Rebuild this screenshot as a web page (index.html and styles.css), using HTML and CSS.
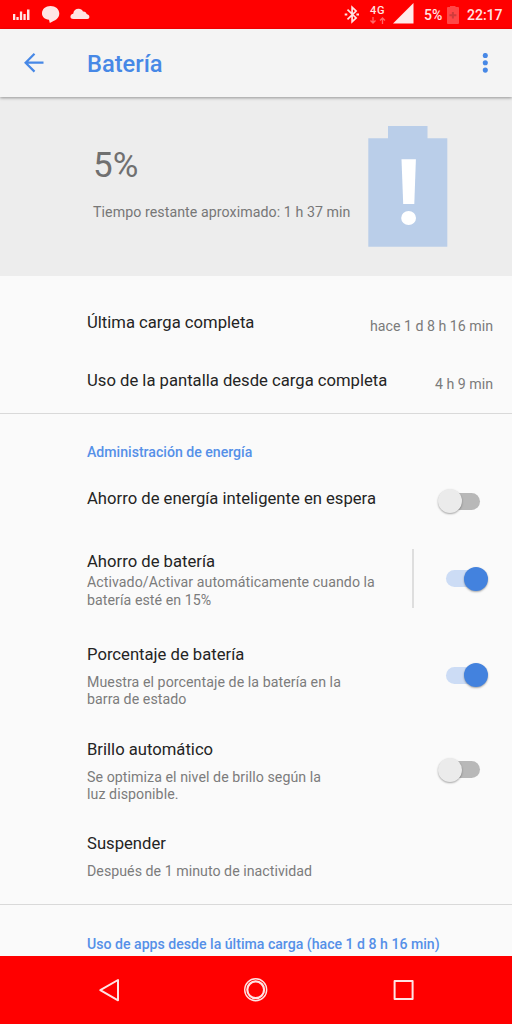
FILE: index.html
```html
<!DOCTYPE html>
<html lang="es">
<head>
<meta charset="utf-8">
<title>Batería</title>
<link rel="stylesheet" href="styles.css">
</head>
<body>
<div class="screen">
  <div class="status">
    <svg class="status-left" width="100" height="29" viewBox="0 0 100 29" fill="#ffe4e4">
      <path d="M13 14h2.300v6H13zM16.400 17h2.300v3h-2.300zM19.900 11.500h2.300V20h-2.300zM23.400 14h2.300v6h-2.300zM27 9.500h2.500V20H27z"/>
      <path d="M50.500 6c5 0 8.800 3 8.800 7.600 0 5-4.200 7-9.500 9.300l-.8-3.200c-4.300-.6-7-2.900-7-6.300C42 9 45.700 6 50.500 6z"/>
      <path d="M73.500 19c-2.500 0-3.300-1.500-3-2.800.3-1.500 1.300-2.200 2.700-2.500.4-3.200 2.500-5 5.400-5 2.100 0 3.600 1 4.400 2.700 2-.2 3.300.9 3.600 2.700 1.600.4 2.800 1.400 2.800 2.900 0 1.300-.8 2-2 2z"/>
    </svg>
    <div class="status-right">
      <svg width="17" height="29" viewBox="0 0 17 29" fill="none" stroke="#ffe4e4" stroke-width="1.700"><path d="M3.500 9.700l8.600 8.300L8.100 21.700V7.300l4 3.700-8.600 8.300"/><path d="M.7 14.500h2.600M12.400 14.500H15" stroke-width="2.200"/></svg>
      <div class="network"><span>4G</span><svg width="16" height="7" viewBox="0 0 16 7" fill="none" stroke="#ff6666" stroke-width="1.300"><path d="M3 0v6M.5 3.500L3 6l2.500-2.500M12.500 7V1M10 3.500L12.500 1 15 3.500"/></svg></div>
      <svg class="signal" width="21" height="29" viewBox="0 0 21 29"><path d="M0 23.500L20.500 3v20.500z" fill="#ffe9e9"/></svg>
      <span class="percent">5%</span>
      <svg class="mini" width="12" height="29" viewBox="0 0 12 29"><path d="M0 8q0-1 1-1h2V6h5.500v1H11q1 0 1 1v15q0 1-1 1H1q-1 0-1-1z" fill="#ff4747"/><path d="M2.400 15.300h7M5.900 12v6.600" stroke="#d03c3c" stroke-width="2"/></svg>
      <span class="clock">22:17</span>
    </div>
  </div>
  <header class="bar">
    <svg class="back" width="20" height="20" viewBox="0 0 20 20" fill="none" stroke="#4788e6" stroke-width="2.200"><path d="M19.500 9.700H1.700M10.500.8L1.600 9.700l8.900 8.900"/></svg>
    <h1 class="bar-title">Batería</h1>
    <svg class="more" width="6" height="20" viewBox="0 0 6 20" fill="#4788e6"><circle cx="3.300" cy="2.500" r="2.550"/><circle cx="3.300" cy="9.800" r="2.550"/><circle cx="3.300" cy="17.100" r="2.550"/></svg>
  </header>
  <main class="content">
    <section class="summary">
      <div class="summary-text">
        <div class="level">5%</div>
        <div class="remaining">Tiempo restante aproximado: 1 h 37 min</div>
      </div>
      <svg class="battery" width="80" height="122" viewBox="0 0 80 122"><path d="M.3 12.200H20V0h39.500v12.200h19.800v108.600H.3z" fill="#bacee9"/><path d="M33.500 33.300h14.400l-1.600 44.800H35.200z" fill="#fff"/><ellipse cx="40.600" cy="92" rx="7.400" ry="7.100" fill="#fff"/></svg>
    </section>
    <section class="group usage">
      <div class="stat"><span class="title">Última carga completa</span><span class="value">hace 1 d 8 h 16 min</span></div>
      <div class="stat"><span class="title">Uso de la pantalla desde carga completa</span><span class="value">4 h 9 min</span></div>
    </section>
    <section class="group energy">
      <h2 class="heading">Administración de energía</h2>
      <div class="row standby"><div class="label"><div class="title">Ahorro de energía inteligente en espera</div></div><div class="control"><i class="switch"></i></div></div>
      <div class="row saver"><div class="label"><div class="title">Ahorro de batería</div><p class="note">Activado/Activar automáticamente cuando la<br>batería esté en 15%</p></div><div class="control split"><i class="switch on"></i></div></div>
      <div class="row percentage"><div class="label"><div class="title">Porcentaje de batería</div><p class="note">Muestra el porcentaje de la batería en la<br>barra de estado</p></div><div class="control"><i class="switch on"></i></div></div>
      <div class="row brightness"><div class="label"><div class="title">Brillo automático</div><p class="note">Se optimiza el nivel de brillo según la<br>luz disponible.</p></div><div class="control"><i class="switch"></i></div></div>
      <div class="row sleep"><div class="label"><div class="title">Suspender</div><p class="note">Después de 1 minuto de inactividad</p></div></div>
    </section>
    <section class="apps"><h2 class="heading">Uso de apps desde la última carga (hace 1 d 8 h 16 min)</h2></section>
  </main>
  <nav class="nav">
    <svg width="512" height="68" viewBox="0 0 512 68" fill="none" stroke="#ffe4e4" stroke-width="2" stroke-linejoin="round"><path d="M118 24v20.300L100.300 34.200z"/><circle cx="255.700" cy="33.800" r="11" stroke-width="1.400"/><circle cx="255.700" cy="33.800" r="8.400" stroke-width="2.200"/><rect x="394.600" y="25" width="18" height="18"/></svg>
  </nav>
</div>
</body>
</html>
```
FILE: styles.css
```css
* { box-sizing: border-box; }
body { margin: 0; background: #fafafa; font-family: Roboto, sans-serif; }
h1, h2, p { margin: 0; }
svg { display: block; flex: none; }
.screen { width: 512px; height: 1024px; display: flex; flex-direction: column; overflow: hidden; }
.status { height: 29px; flex: none; background: #f00; display: flex; justify-content: space-between; color: #ffe4e4; }
.status-right { display: flex; align-items: center; padding-right: 10px; font-weight: 500; white-space: nowrap; }
.network { width: 17px; margin: 0 6px 0 9px; font-size: 11px; line-height: 11px; letter-spacing: .8px; font-weight: 500; }
.network svg { margin-top: 1px; }
.percent { font-size: 14px; margin-left: 10px; width: 18px; }
.mini { margin: 0 8px 0 5px; }
.clock { font-size: 14px; width: 35px; }
.bar { height: 68px; flex: none; display: flex; align-items: center; padding: 0 24px; background: #f4f4f4; box-shadow: 0 1px 3px rgba(0,0,0,.38); z-index: 1; }
.bar-title { flex: 1; margin-left: 43px; padding-top: 1px; font-size: 23.700px; font-weight: 500; line-height: 28px; color: #4788e6; }
.content { flex: 1; min-height: 0; overflow: hidden; }
.summary { height: 179px; background: #ededed; display: flex; justify-content: space-between; padding: 29px 64px 0 93px; }
.level { margin-top: 18px; font-size: 35px; line-height: 44px; color: #707070; }
.remaining { margin-top: 14px; font-size: 14.200px; letter-spacing: .07px; line-height: 20px; color: #777; white-space: nowrap; }
.group { border-bottom: 1px solid #d9d9d9; }
.usage { height: 138px; padding: 21px 19px 0 87px; }
.stat { height: 58px; display: flex; justify-content: space-between; align-items: center; }
.stat .title { margin-top: -7px; }
.title { font-size: 16.650px; line-height: 20px; color: #242424; white-space: nowrap; }
.value { font-size: 14.200px; color: #7b7b7b; }
.energy { height: 491px; }
.heading { height: 58px; padding: 28px 0 0 87px; font-size: 14.120px; font-weight: 500; line-height: 20px; color: #5590e8; white-space: nowrap; }
.row { display: flex; justify-content: space-between; padding-left: 87px; }
.control { width: 99px; display: flex; align-items: center; padding-left: 25px; }
.control:has(.on) { padding-left: 33px; }
.split { width: 100px; border-left: 2px solid #dedede; margin: 19px 0 20px; }
.split:has(.on) { padding-left: 32px; }
.note { font-size: 14.200px; letter-spacing: .06px; line-height: 17.200px; color: #7c7c7c; white-space: nowrap; }
.standby { height: 58px; }
.standby .label { padding-top: 17px; }
.saver { height: 98px; }
.saver .label { padding-top: 22px; }
.saver .note { padding-top: 2.400px; }
.percentage { height: 94px; }
.percentage .label { padding-top: 17px; }
.percentage .note, .brightness .note { padding-top: 9px; }
.brightness { height: 95px; }
.brightness .label { padding-top: 18px; }
.sleep .label { padding-top: 17px; }
.sleep .note { padding-top: 9px; letter-spacing: .03px; }
.apps .heading { padding-top: 29px; }
.switch { width: 42px; height: 24px; display: grid; align-items: center; }
.switch::before, .switch::after { content: ""; grid-area: 1 / 1; }
.switch::before { width: 34px; height: 17px; border-radius: 9px; background: #b8b8b8; justify-self: end; }
.switch::after { width: 24px; height: 24px; border-radius: 50%; background: #ebebeb; box-shadow: 0 1px 2px rgba(0,0,0,.35); justify-self: start; }
.switch.on::before { background: #ccdcf5; justify-self: start; }
.switch.on::after { background: #4382de; justify-self: end; }
.nav { height: 68px; flex: none; background: #f00; }
```
